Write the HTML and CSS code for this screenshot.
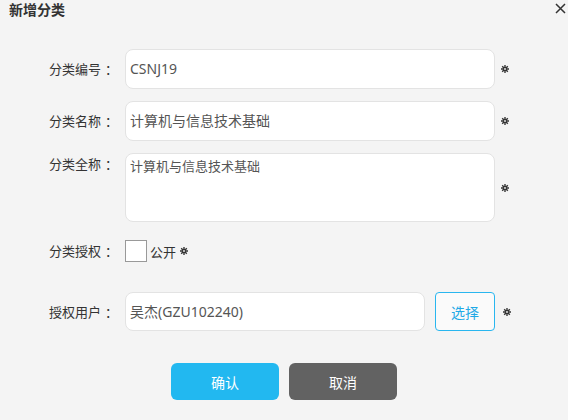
FILE: index.html
```html
<!DOCTYPE html>
<html lang="zh-CN">
<head>
  <meta charset="UTF-8" />
  <title>新增分类</title>
  <link rel="stylesheet" href="styles.css">
</head>
<body>
  <header>
    <h2>新增分类</h2>
    <span class="close">
      <svg width="11" height="11" viewBox="0 0 11 11"><path d="M1 1L10 10M10 1L1 10" stroke="#333" stroke-width="1.5" fill="none"/></svg>
    </span>
  </header>

  <form class="form">
    <div class="row">
      <label>分类编号<span class="colon">：</span></label>
      <div class="field">CSNJ19</div>
      <span class="req"></span>
    </div>
    <div class="row">
      <label>分类名称<span class="colon">：</span></label>
      <div class="field">计算机与信息技术基础</div>
      <span class="req"></span>
    </div>
    <div class="row top">
      <label>分类全称<span class="colon">：</span></label>
      <div class="field area">计算机与信息技术基础</div>
      <span class="req"></span>
    </div>
    <div class="row check">
      <label>分类授权<span class="colon">：</span></label>
      <span class="box"></span>
      <span class="public">公开</span>
      <span class="req"></span>
    </div>
    <div class="row user">
      <label>授权用户<span class="colon">：</span></label>
      <div class="field short">吴杰(GZU102240)</div>
      <button type="button" class="pick">选择</button>
      <span class="req"></span>
    </div>
    <div class="actions">
      <button type="button" class="ok">确认</button>
      <button type="button" class="cancel">取消</button>
    </div>
  </form>

  <script>
    document.querySelectorAll('.req').forEach(function (el) {
      el.innerHTML = '<svg width="8" height="8" viewBox="0 0 8 8"><path d="M4 0V8M0 4H8M1.2 1.2L6.8 6.8M6.8 1.2L1.2 6.8" stroke="#333" stroke-width="1.4"/><circle cx="4" cy="4" r="0.9" fill="#f4f4f4"/></svg>';
    });
  </script>
</body>
</html>
```

FILE: styles.css
```css
body {
  margin: 0;
  background: #f4f4f4;
  font-family: "Noto Sans", "Noto Sans CJK SC", sans-serif;
  color: #333;
  width: 568px;
  height: 420px;
  overflow: hidden;
}
header {
  display: flex;
  justify-content: space-between;
  align-items: flex-start;
  height: 49px;
}
header h2 {
  margin: 0;
  padding: 0 0 0 9px;
  font-family: "Noto Sans CJK SC", sans-serif;
  font-size: 14px;
  line-height: 18px;
  font-weight: bold;
  color: #333;
}
.close {
  display: flex;
  padding: 3px 2px 0 0;
}
.form {
  padding-left: 49px;
  margin: 0;
}
.row {
  display: flex;
  align-items: center;
  margin-bottom: 12px;
}
.row label {
  width: 76px;
  font-family: "Noto Sans CJK SC", sans-serif;
  font-size: 13px;
  line-height: 22px;
  color: #333;
}
.colon {
  font-family: "Noto Sans CJK TC", sans-serif;
  margin-left: 4px;
}
.row.top label {
  align-self: flex-start;
}
.field {
  box-sizing: border-box;
  width: 370px;
  height: 40px;
  background: #fff;
  border: 1px solid #e3e3e3;
  border-radius: 8px;
  padding: 0 4px;
  font-size: 14px;
  line-height: 38px;
  color: #555;
}
.field.area {
  height: 69px;
  line-height: 20px;
  padding-top: 2px;
  font-size: 13px;
}
.field.short {
  width: 300px;
  height: 39px;
  line-height: 37px;
}
.req {
  display: flex;
  margin-left: 6px;
}
.row.check {
  margin-top: 18px;
  margin-bottom: 30px;
}
.box {
  box-sizing: border-box;
  width: 22px;
  height: 22px;
  background: #fff;
  border: 1px solid #999;
}
.public {
  font-size: 13px;
  margin-left: 3px;
}
.row.check .req {
  margin-left: 4px;
}
.pick {
  box-sizing: border-box;
  width: 60px;
  height: 39px;
  margin-left: 10px;
  background: #fafafa;
  border: 1px solid #29b6ef;
  border-radius: 4px;
  color: #1fa9e6;
  font-family: inherit;
  font-size: 14px;
  padding: 0;
}
.row.user .req {
  margin-left: 8px;
}
.actions {
  display: flex;
  gap: 10px;
  margin: 32px 0 0 122px;
}
.actions button {
  width: 108px;
  height: 37px;
  border: none;
  border-radius: 6px;
  color: #fff;
  font-family: inherit;
  font-size: 14px;
  padding: 0;
}
.ok {
  background: #22b8f0;
}
.cancel {
  background: #626262;
}
```
